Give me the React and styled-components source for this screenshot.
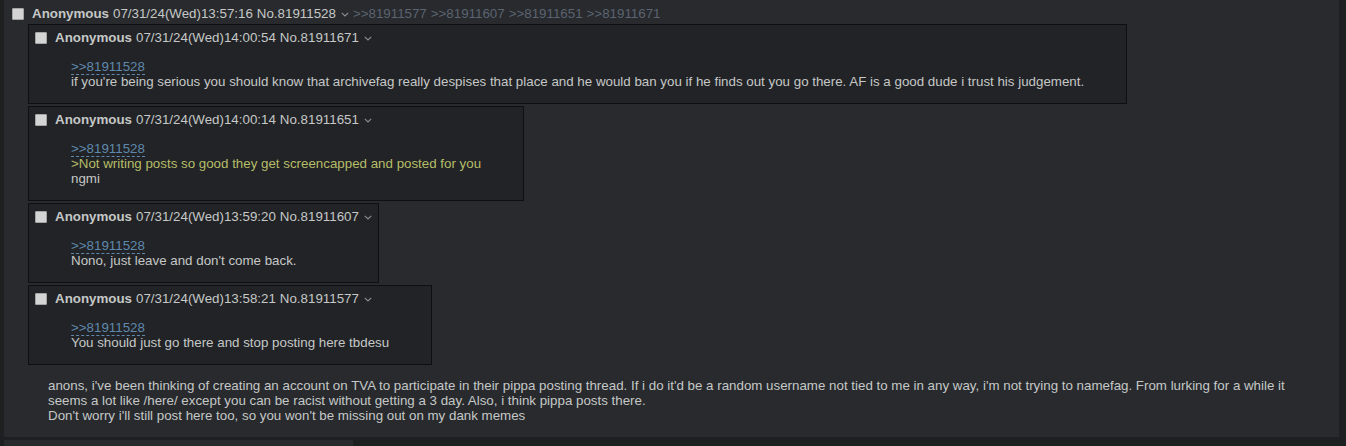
import React from 'react';
import styled, { createGlobalStyle } from 'styled-components';

const GlobalStyle = createGlobalStyle`
  body {
    margin: 0;
    background: #1d1f21;
    color: #c5c8c6;
    font-family: "Liberation Sans", Arial, sans-serif;
    font-size: 13.33px;
    overflow: hidden;
  }
`;

const Thread = styled.div`
  display: flex;
  flex-direction: column;
  align-items: flex-start;
  gap: 3px;
  padding: 0 7px 0 4px;
`;

const Reply = styled.div`
  align-self: stretch;
  background: #282a2e;
  padding: 6px 2px 1px 4px;
`;

const NextReply = styled.div`
  width: 349px;
  height: 20px;
  background: #282a2e;
`;

const Inline = styled.div`
  width: fit-content;
  background: #222326;
  border: 1px solid #0f0f10;
  padding: 5px 2px 1px 2px;
`;

const Inlines = styled.div`
  display: flex;
  flex-direction: column;
  align-items: flex-start;
  gap: 2px;
  margin: 3px 0 0 20px;
`;

const PostInfo = styled.div`
  display: flex;
  align-items: center;
  height: 15px;
  white-space: nowrap;
  padding-left: ${p => p.$indent}px;
`;

const Check = styled.span`
  width: 12px;
  height: 12px;
  background: #d4d4d4;
  border: 1px solid #a5a5a5;
  box-sizing: border-box;
  border-radius: 1px;
  margin-right: 8px;
  flex-shrink: 0;
`;

const Name = styled.span`
  font-weight: bold;
  color: #c5c8c6;
  margin-right: 4px;
`;

const DateTime = styled.span`
  margin-right: 4px;
`;

const MenuBtn = styled.span`
  display: inline-flex;
  align-items: center;
  margin: 1px 4px 0 5px;
`;

const Backlink = styled.span`
  color: #5b6470;
  margin-right: 4px;
`;

const Message = styled.blockquote`
  margin: ${p => p.$top}px 40px 13px ${p => p.$left}px;
  line-height: 15px;
  white-space: nowrap;
`;

const Quotelink = styled.span`
  color: #5f89ac;
  border-bottom: 1px dashed #5f89ac;
`;

const Greentext = styled.span`
  color: #b5bd68;
`;

const Chevron = () => (
  <svg width="8" height="5" viewBox="0 0 8 5">
    <path d="M0.8 0.8 L4 4 L7.2 0.8" fill="none" stroke="#8a9099" strokeWidth="1.1" />
  </svg>
);

const Info = ({ indent, time, no, backlinks }) => (
  <PostInfo $indent={indent}>
    <Check />
    <Name>Anonymous</Name>
    <DateTime>{time}</DateTime>
    <span>No.{no}</span>
    <MenuBtn><Chevron /></MenuBtn>
    {backlinks && backlinks.map(b => <Backlink key={b}>&gt;&gt;{b}</Backlink>)}
  </PostInfo>
);

const inlines = [
  {
    time: '07/31/24(Wed)14:00:54',
    no: '81911671',
    lines: [
      "if you're being serious you should know that archivefag really despises that place and he would ban you if he finds out you go there. AF is a good dude i trust his judgement."
    ]
  },
  {
    time: '07/31/24(Wed)14:00:14',
    no: '81911651',
    green: '>Not writing posts so good they get screencapped and posted for you',
    lines: ['ngmi']
  },
  {
    time: '07/31/24(Wed)13:59:20',
    no: '81911607',
    lines: ["Nono, just leave and don't come back."]
  },
  {
    time: '07/31/24(Wed)13:58:21',
    no: '81911577',
    lines: ['You should just go there and stop posting here tbdesu']
  }
];

export default function App() {
  return (
    <>
      <GlobalStyle />
      <Thread>
        <Reply>
          <Info
            indent={4}
            time="07/31/24(Wed)13:57:16"
            no="81911528"
            backlinks={['81911577', '81911607', '81911651', '81911671']}
          />
          <Inlines>
            {inlines.map(p => (
              <Inline key={p.no}>
                <Info indent={4} time={p.time} no={p.no} />
                <Message $top={14} $left={40}>
                  <Quotelink>&gt;&gt;81911528</Quotelink>
                  <br />
                  {p.green && (<><Greentext>{p.green}</Greentext><br /></>)}
                  {p.lines.map(l => <div key={l}>{l}</div>)}
                </Message>
              </Inline>
            ))}
          </Inlines>
          <Message $top={13} $left={40}>
            anons, i've been thinking of creating an account on TVA to participate in their pippa posting thread. If i do it'd be a random username not tied to me in any way, i'm not trying to namefag. From lurking for a while it
            <br />
            seems a lot like /here/ except you can be racist without getting a 3 day. Also, i think pippa posts there.
            <br />
            Don't worry i'll still post here too, so you won't be missing out on my dank memes
          </Message>
        </Reply>
        <NextReply />
      </Thread>
    </>
  );
}
